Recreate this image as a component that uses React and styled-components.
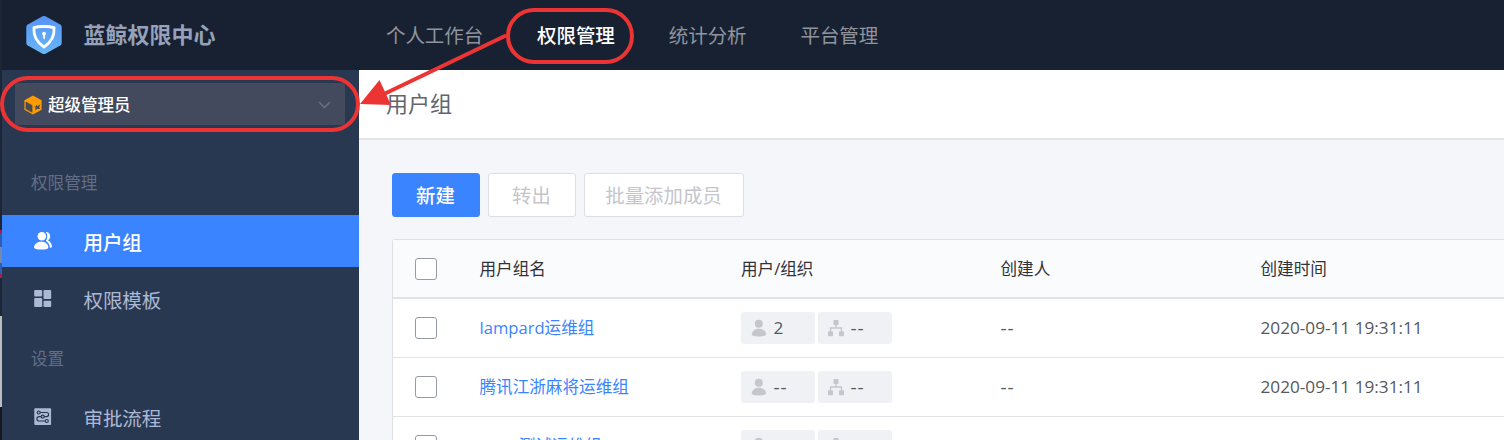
import React from "react";
import styled, { createGlobalStyle } from "styled-components";

const Global = createGlobalStyle`
  * { box-sizing: border-box; }
  body {
    margin: 0;
    overflow: hidden;
    font-family: "Open Sans", "Noto Sans CJK SC", sans-serif;
    -webkit-font-smoothing: antialiased;
  }
`;

const Shell = styled.div`
  position: relative;
  width: 1504px;
  height: 440px;
  overflow: hidden;
  display: grid;
  grid-template-columns: 2px 1fr;
`;

const Edge = styled.div`
  display: flex;
  flex-direction: column;
`;

const EdgePart = styled.span`
  flex: none;
  height: ${(p) => p.$h}px;
  background: ${(p) => p.$c};
`;

const Layout = styled.div`
  display: flex;
  flex-direction: column;
  height: 440px;
  min-width: 0;
`;

const Header = styled.header`
  flex: none;
  display: flex;
  align-items: center;
  height: 70px;
  background: #182132;
`;

const Brand = styled.div`
  display: flex;
  align-items: center;
  width: 384px;
  padding-left: 24px;
  gap: 21.5px;

  svg { margin-top: -1px; }
`;

const BrandName = styled.h1`
  margin: -2px 0 0;
  font-size: 22px;
  line-height: 30px;
  font-weight: 700;
  color: #96a2b9;
`;

const Nav = styled.nav`
  display: flex;
  gap: 54px;
  padding-top: 2px;
`;

const NavItem = styled.a`
  font-size: 19.5px;
  line-height: 28px;
  letter-spacing: -0.08px;
  font-weight: ${(p) => (p.$active ? 500 : 400)};
  color: ${(p) => (p.$active ? "#ffffff" : "#8f959f")};
`;

const Body = styled.div`
  display: flex;
  flex: 1;
  min-height: 0;
`;

const Sidebar = styled.aside`
  flex: none;
  display: flex;
  flex-direction: column;
  width: 357px;
  background: #293851;
  overflow: hidden;
`;

const RoleSelect = styled.div`
  flex: none;
  display: flex;
  align-items: center;
  height: 42px;
  margin: 13px 14px 0 13px;
  padding: 1px 14px 0 9px;
  gap: 6px;
  border-radius: 3px;
  background: #434a5e;
  color: #fff;
  font-size: 16.5px;
  font-weight: 500;

  span { flex: 1; margin-top: -1px; }
`;

const MenuTitle = styled.div`
  flex: none;
  height: 40px;
  line-height: 40px;
  margin-top: ${(p) => p.$top}px;
  padding-left: 29px;
  font-size: 16.6px;
  color: #626e85;
`;

const MenuItem = styled.a`
  flex: none;
  display: flex;
  align-items: center;
  height: 52px;
  margin-top: ${(p) => p.$top}px;
  padding-left: 31px;
  gap: 30.5px;
  font-size: 19.5px;
  letter-spacing: -0.1px;
  font-weight: ${(p) => (p.$active ? 500 : 400)};
  color: ${(p) => (p.$active ? "#ffffff" : "#acb9d4")};
  background: ${(p) => (p.$active ? "#3a84ff" : "transparent")};

  svg { flex: none; margin-top: -1px; }
`;

const Main = styled.main`
  flex: 1;
  min-width: 0;
  background: #f5f6fa;
`;

const PageHead = styled.div`
  height: 70px;
  padding: 17px 0 0 27px;
  background: #fff;
  border-bottom: 2px solid #e1e5ea;
  font-size: 22px;
  line-height: 33px;
  color: #62656e;
`;

const Toolbar = styled.div`
  display: flex;
  gap: 8px;
  padding: 32.5px 0 22.5px 33px;
`;

const Button = styled.button`
  width: ${(p) => p.$w}px;
  height: 44px;
  padding: 0 1px 0 0;
  border: 1.5px solid ${(p) => (p.$primary ? "#3a84ff" : "#dcdee5")};
  border-radius: 3px;
  background: ${(p) => (p.$primary ? "#3a84ff" : "#fff")};
  color: ${(p) => (p.$primary ? "#fff" : "#c4c6cc")};
  font-family: inherit;
  font-size: 19.4px;
  font-weight: ${(p) => (p.$primary ? 500 : 400)};
`;

const Table = styled.div`
  width: 1200px;
  margin-left: 33px;
  border: 1px solid #dfe0e5;
  border-right: 0;
  border-bottom: 0;
  border-radius: 3px 0 0 0;
  background: #fff;
`;

const Row = styled.div`
  display: grid;
  grid-template-columns: 64.5px 261.5px 259.5px 260px 1fr;
  align-items: center;
  height: 59px;
  padding-left: 22px;
  border-bottom: ${(p) => (p.$head ? 2 : 1.5)}px solid #e2e3e8;
  background: ${(p) => (p.$head ? "#fafbfd" : "#fff")};
  color: ${(p) => (p.$head ? "#313238" : "#565860")};
  font-size: 16.6px;
  line-height: 24px;
`;

const Check = styled.span`
  width: 22px;
  height: 22px;
  border: 1.5px solid #979ba5;
  border-radius: 3px;
  background: #fff;
`;

const GroupLink = styled.a`
  color: #3a84ff;
`;

const Tags = styled.div`
  display: flex;
  gap: 3px;
`;

const Tag = styled.span`
  display: flex;
  align-items: center;
  width: 74px;
  height: 32px;
  padding-left: 10px;
  gap: 6.5px;
  border-radius: 3px;
  background: #f0f1f5;
`;

const Value = styled.span`
  font-size: ${(p) => (p.$empty ? 19 : 17.2)}px;
  letter-spacing: ${(p) => (p.$empty ? 1 : 0)}px;
  font-weight: ${(p) => (p.$empty ? 500 : 400)};
`;

const Annotation = styled.svg`
  position: absolute;
  left: 0;
  top: 0;
`;

const LogoIcon = () => (
  <svg width="36" height="40" viewBox="0 0 36 40">
    <defs>
      <linearGradient id="logo" x1="0" y1="0" x2="0" y2="1">
        <stop offset="0" stopColor="#5594f2" />
        <stop offset="1" stopColor="#68b6f8" />
      </linearGradient>
    </defs>
    <path d="M16.5 1.3Q18 .6 19.5 1.3L34.2 9.5Q35.7 10.4 35.7 12V28Q35.7 29.6 34.2 30.5L19.5 38.7Q18 39.4 16.5 38.7L1.8 30.5Q.3 29.6.3 28V12Q.3 10.4 1.8 9.5Z" fill="url(#logo)" />
    <path d="M18 11.500C22 11.500 25.500 11.900 28.100 12.700C28.600 20.500 25 27.700 18 32C11 27.700 7.400 20.500 7.900 12.700C10.500 11.900 14 11.500 18 11.500Z" fill="none" stroke="#fff" strokeWidth="2.800" strokeLinejoin="round" />
    <circle cx="18" cy="18.700" r="1.900" fill="#fff" />
    <path d="M17.100 20H18.900V24.500L17.100 23.300Z" fill="#fff" />
  </svg>
);

const CubeIcon = () => (
  <svg width="18" height="20" viewBox="0 0 18 20">
    <path d="M9 .5L17.600 5.300V14.700L9 19.500L.4 14.700V5.300Z" fill="#ff9c01" />
    <path d="M1.600 6.600L8.400 10.300V17.700L1.600 14Z" fill="#4b4a52" />
    <path d="M12.200 9.600L13.300 11.200L16.300 9.300L15.200 12.300L16.200 14L13.500 13.700L11.200 15.600L11.600 12.800L10.200 11.500L12 11.400Z" fill="#434a5e" />
  </svg>
);

const ChevronIcon = () => (
  <svg width="13" height="8" viewBox="0 0 13 8">
    <path d="M1 1L6.500 6.500L12 1" fill="none" stroke="#686e7c" strokeWidth="1.600" />
  </svg>
);

const UsersIcon = () => (
  <svg width="20" height="20" viewBox="0 0 20 20" fill="#fff">
    <circle cx="8.800" cy="5.300" r="4.300" />
    <path d="M1 16.300C1.500 12.500 4.500 10.700 8.300 10.700S15 12.500 15.400 16.300C15.400 17.800 13 18.600 8.200 18.600S1 17.800 1 16.300Z" />
    <path d="M12.800 1.100C15.600 1.100 17.400 3.100 17.200 5.400C17 7.300 16 8.600 14.900 9.300C17.100 10.400 18.900 12.700 19.100 16.300L16.900 16.700C16.700 13.500 15.200 11.300 12.900 9.900C14.700 7.500 14.800 3.500 12.800 1.100Z" />
  </svg>
);

const TilesIcon = () => (
  <svg width="20" height="20" viewBox="0 0 20 20" fill="#acb9d4">
    <rect x="1.200" y="1" width="8" height="6.500" rx="1" />
    <rect x="10.500" y="1" width="7.700" height="9" rx="1" />
    <rect x="1.200" y="9" width="8" height="9" rx="1" />
    <rect x="10.500" y="11.700" width="7.700" height="6.300" rx="1" />
  </svg>
);

const FlowIcon = () => (
  <svg width="20" height="20" viewBox="0 0 20 20">
    <rect x="1.300" y="1.300" width="16.800" height="16.800" rx="1" fill="#acb9d4" />
    <g fill="none" stroke="#2a3851" strokeWidth="1.200">
      <circle cx="5.700" cy="5.500" r="1.500" />
      <circle cx="9.700" cy="9.600" r="1.500" />
      <circle cx="13.800" cy="14" r="1.500" />
      <path d="M7.200 5.500H13.500C16.300 5.500 16.300 9.600 13.500 9.600H11.200M8.200 9.600H6C3.200 9.600 3.200 14 6 14H12.300" />
    </g>
  </svg>
);

const PersonIcon = () => (
  <svg width="16" height="18" viewBox="0 0 16 18" fill="#c4c6cc">
    <circle cx="7.800" cy="4.700" r="4" />
    <path d="M.8 15.200C1.200 11.800 4 9.700 7.900 9.700S14.700 11.800 15.100 15.200C15.100 16.700 12.600 17.400 7.900 17.400S.8 16.700.8 15.200Z" />
  </svg>
);

const OrgIcon = () => (
  <svg width="16" height="18" viewBox="0 0 16 18" fill="#c4c6cc">
    <rect x="5.500" y="1" width="5" height="5" rx=".8" />
    <rect x="0" y="12.200" width="5" height="5" rx=".8" />
    <rect x="11" y="12.200" width="5" height="5" rx=".8" />
    <path d="M8 6V9M2.500 12.500V9H13.500V12.500" fill="none" stroke="#c4c6cc" strokeWidth="1.300" />
  </svg>
);

const rows = [
  { name: "lampard运维组", users: "2", orgs: "--" },
  { name: "腾讯江浙麻将运维组", users: "--", orgs: "--" },
  { name: "ne3d测试运维组", users: "24", orgs: "--" },
];

const Cell = ({ text }) => <Value $empty={text === "--"}>{text}</Value>;

export default function App() {
  return (
    <Shell>
      <Global />
      <Edge>
        <EdgePart $h={230} $c="#1d2636" />
        <EdgePart $h={4} $c="#a81f4b" />
        <EdgePart $h={13} $c="#2c5cb4" />
        <EdgePart $h={16} $c="#7689a8" />
        <EdgePart $h={11} $c="#2c5cb4" />
        <EdgePart $h={4} $c="#a81f4b" />
        <EdgePart $h={38} $c="#1d2636" />
        <EdgePart $h={91} $c="#bdbdbd" />
        <EdgePart $h={33} $c="#161822" />
      </Edge>
      <Layout>
        <Header>
          <Brand>
            <LogoIcon />
            <BrandName>蓝鲸权限中心</BrandName>
          </Brand>
          <Nav>
            <NavItem>个人工作台</NavItem>
            <NavItem $active>权限管理</NavItem>
            <NavItem>统计分析</NavItem>
            <NavItem>平台管理</NavItem>
          </Nav>
        </Header>
        <Body>
          <Sidebar>
            <RoleSelect>
              <CubeIcon />
              <span>超级管理员</span>
              <ChevronIcon />
            </RoleSelect>
            <MenuTitle $top={38}>权限管理</MenuTitle>
            <MenuItem $active $top={12}><UsersIcon /><span>用户组</span></MenuItem>
            <MenuItem $top={6}><TilesIcon /><span>权限模板</span></MenuItem>
            <MenuTitle $top={14}>设置</MenuTitle>
            <MenuItem $top={12}><FlowIcon /><span>审批流程</span></MenuItem>
          </Sidebar>
          <Main>
            <PageHead>用户组</PageHead>
            <Toolbar>
              <Button $primary $w={88}>新建</Button>
              <Button $w={88}>转出</Button>
              <Button $w={160}>批量添加成员</Button>
            </Toolbar>
            <Table>
              <Row $head>
                <Check />
                <span>用户组名</span>
                <span>用户/组织</span>
                <span>创建人</span>
                <span>创建时间</span>
              </Row>
              {rows.map((r) => (
                <Row key={r.name}>
                  <Check />
                  <GroupLink>{r.name}</GroupLink>
                  <Tags>
                    <Tag><PersonIcon /><Cell text={r.users} /></Tag>
                    <Tag><OrgIcon /><Cell text={r.orgs} /></Tag>
                  </Tags>
                  <Cell text="--" />
                  <Value>2020-09-11 19:31:11</Value>
                </Row>
              ))}
            </Table>
          </Main>
        </Body>
      </Layout>
      <Annotation width="1504" height="440" viewBox="0 0 1504 440">
        <g fill="none" stroke="#ec3434" strokeWidth="4">
          <rect x="2" y="78" width="356" height="52" rx="26" />
          <rect x="508" y="10" width="124" height="52" rx="26" />
          <path d="M506 35.500L382 95" />
        </g>
        <path d="M360 104L379.500 80L391 105Z" fill="#ec3434" />
      </Annotation>
    </Shell>
  );
}
